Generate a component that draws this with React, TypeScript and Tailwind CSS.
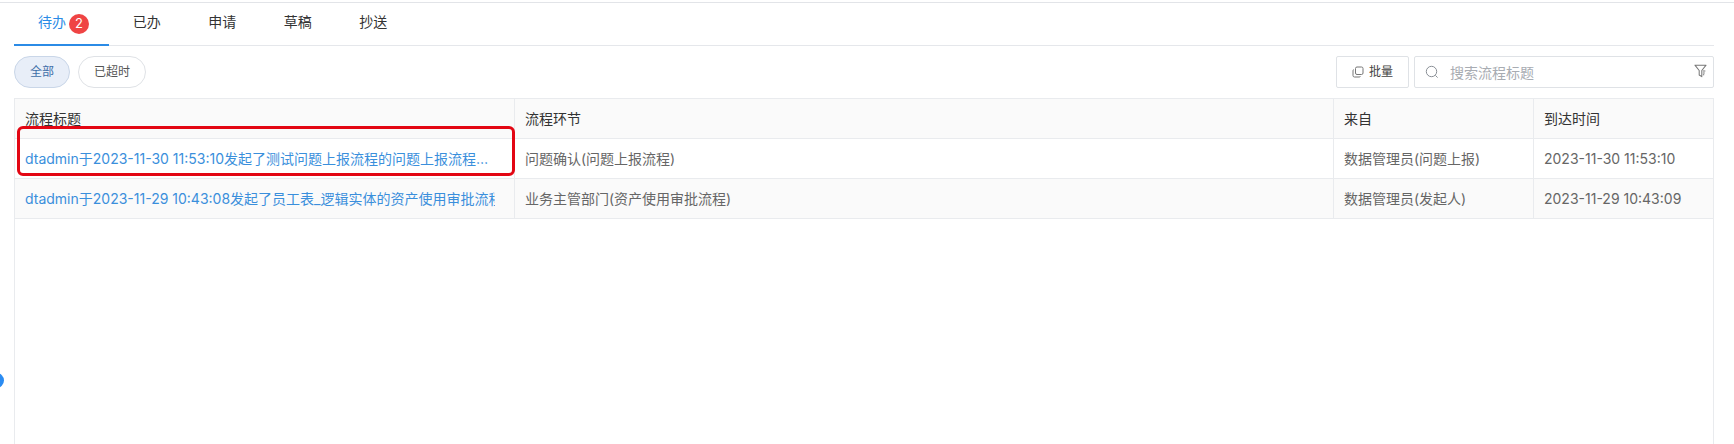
const FONT = "font-['Inter','Noto_Sans_CJK_SC',sans-serif]";

const tabs = ["已办", "申请", "草稿", "抄送"];

const rows = [
  {
    title: "dtadmin于2023-11-30 11:53:10发起了测试问题上报流程的问题上报流程…",
    node: "问题确认(问题上报流程)",
    from: "数据管理员(问题上报)",
    time: "2023-11-30 11:53:10",
  },
  {
    title: "dtadmin于2023-11-29 10:43:08发起了员工表_逻辑实体的资产使用审批流程",
    node: "业务主管部门(资产使用审批流程)",
    from: "数据管理员(发起人)",
    time: "2023-11-29 10:43:09",
  },
];

export default function App() {
  return (
    <div className={`${FONT} relative h-[444px] w-[1734px] overflow-hidden bg-white text-[14px] text-[#333]`}>
      <div className="mt-[2px] h-px bg-[#e2e4e8]" />

      <div className="ml-[14px] mr-[20px] flex h-[43px] border-b border-[#e5e7eb]">
        <div className="flex h-[43px] w-[95px] items-center gap-[3px] border-b-2 border-[#2b8be6] pl-[24px] text-[#2b8be6]">
          <span className="mb-[4px]">待办</span>
          <span className="mt-[1px] flex h-[20px] w-[20px] items-center justify-center rounded-full bg-[#ef4444] text-[13px] text-white">2</span>
        </div>
        <div className="flex">
          {tabs.map((t) => (
            <div key={t} className="flex h-[43px] w-[75.5px] items-center justify-center pb-[6px] text-[#333]">
              {t}
            </div>
          ))}
        </div>
      </div>

      <div className="ml-[14px] mr-[20px] mt-[10px] flex h-[32px] items-center justify-between">
        <div className="flex gap-[8px]">
          <div className="flex h-[32px] w-[56px] items-center justify-center rounded-full border border-[#c9d6e8] bg-[#e8eef8] text-[12px] text-[#3f6fa8]">全部</div>
          <div className="flex h-[32px] w-[68px] items-center justify-center rounded-full border border-[#dfe2e6] bg-white text-[12px] text-[#555]">已超时</div>
        </div>
        <div className="flex gap-[5px]">
          <div className="flex h-[32px] w-[73px] items-center justify-center gap-[5px] rounded-[2px] border border-[#dfe2e6] text-[12px] text-[#444]">
            <svg width="12" height="12" viewBox="0 0 12 12" fill="none" stroke="#777" strokeWidth="1">
              <rect x="3.5" y="1" width="7.5" height="7.5" rx="1.5" />
              <path d="M1.8 3.5 A1.3 1.3 0 0 0 1 4.7 V9.5 A1.5 1.5 0 0 0 2.5 11 H7.3 A1.3 1.3 0 0 0 8.5 10.2" />
            </svg>
            <span>批量</span>
          </div>
          <div className="flex h-[32px] w-[300px] items-center rounded-[2px] border border-[#dfe2e6] pl-[10px] pr-[6px]">
            <svg width="14" height="14" viewBox="0 0 14 14" fill="none" stroke="#8a8f96" strokeWidth="1">
              <circle cx="6.5" cy="6.5" r="5.2" />
              <path d="M10.4 10.4 L12.6 12.6" />
            </svg>
            <span className="ml-[11px] flex-1 text-[14px] text-[#a8acb2]">搜索流程标题</span>
            <svg width="13" height="14" viewBox="0 0 14 15" fill="none" stroke="#777" strokeWidth="1.1" strokeLinejoin="round" className="mb-[2px]">
              <path d="M1 1.2 H13 L8.4 7 V13.6 L5.6 11.8 V7 Z" />
              <path d="M9.6 7.6 H12.2 M9.6 9.6 H11.6 M9.6 11.6 H11" />
            </svg>
          </div>
        </div>
      </div>

      <div className="ml-[14px] mr-[20px] mt-[10px] h-[346px] border-x border-t border-[#e9ebee]">
        <div className="grid h-[40px] grid-cols-[500px_819px_200px_1fr] items-stretch border-b border-[#e9ebee] bg-[#fafafa] text-[#333]">
          {["流程标题", "流程环节", "来自", "到达时间"].map((h, i) => (
            <div key={h} className={`flex items-center px-[10px] ${i < 3 ? "border-r border-[#e9ebee]" : ""}`}>{h}</div>
          ))}
        </div>
        {rows.map((r, idx) => (
          <div
            key={r.time}
            className={`grid h-[40px] grid-cols-[500px_819px_200px_1fr] items-stretch border-b border-[#e9ebee] ${idx === 1 ? "bg-[#fafafa]" : "bg-white"} text-[#666]`}
          >
            <div className="flex items-center border-r border-[#e9ebee] px-[10px]">
              <span className="block w-[470px] overflow-hidden whitespace-nowrap text-[#3a8fdc]">{r.title}</span>
            </div>
            <div className="flex items-center border-r border-[#e9ebee] px-[10px]">{r.node}</div>
            <div className="flex items-center border-r border-[#e9ebee] px-[10px]">{r.from}</div>
            <div className="flex items-center px-[10px]">{r.time}</div>
          </div>
        ))}
      </div>

      <div className="absolute left-[17px] top-[126px] h-[50px] w-[498px] rounded-[6px] border-[3px] border-[#e30613]" />
      <div className="absolute left-[-11px] top-[373px] h-[15px] w-[15px] rounded-full bg-[#2b8cf2]" />
    </div>
  );
}
